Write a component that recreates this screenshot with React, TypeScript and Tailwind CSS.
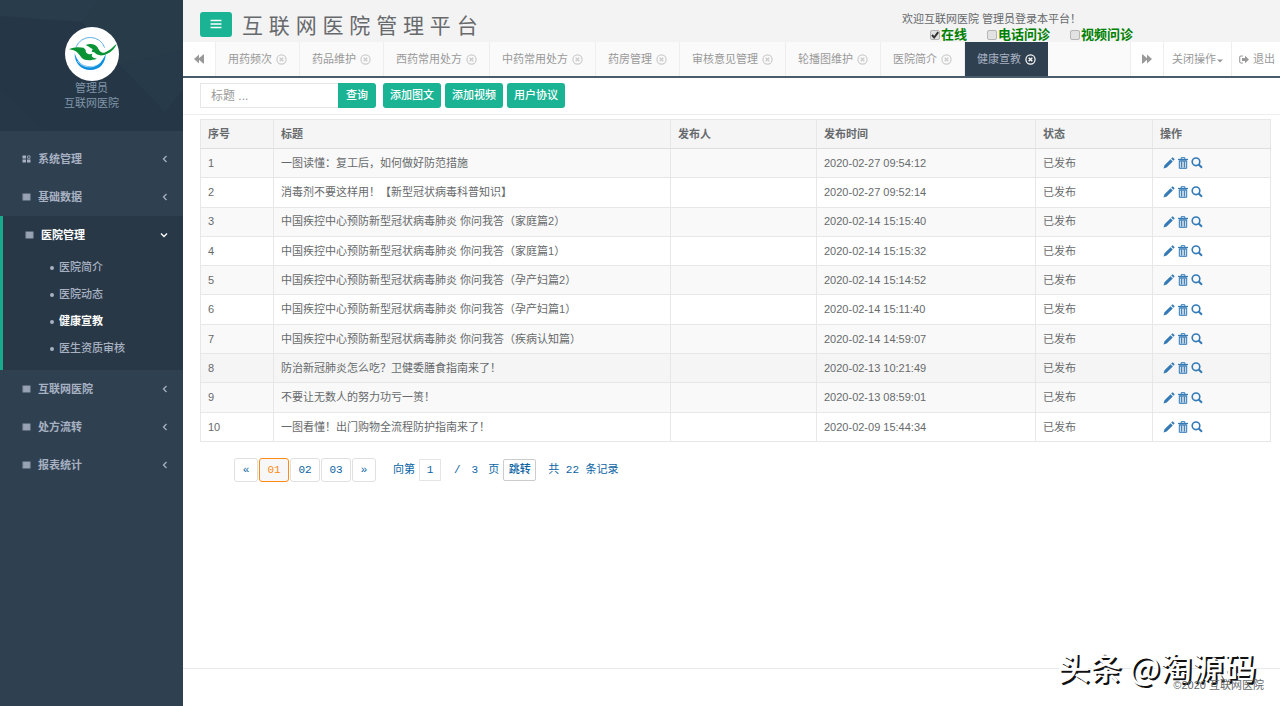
import { useState } from "react";
import type { ReactNode } from "react";

const menuTop = ["系统管理", "基础数据"];
const menuBottom = ["互联网医院", "处方流转", "报表统计"];
const subMenu = ["医院简介", "医院动态", "健康宣教", "医生资质审核"];

const tabs = [
  "用药频次",
  "药品维护",
  "西药常用处方",
  "中药常用处方",
  "药房管理",
  "审核意见管理",
  "轮播图维护",
  "医院简介",
  "健康宣教",
];

const rows = [
  { id: 1, title: "一图读懂：复工后，如何做好防范措施", time: "2020-02-27 09:54:12" },
  { id: 2, title: "消毒剂不要这样用！【新型冠状病毒科普知识】", time: "2020-02-27 09:52:14" },
  { id: 3, title: "中国疾控中心预防新型冠状病毒肺炎 你问我答（家庭篇2）", time: "2020-02-14 15:15:40" },
  { id: 4, title: "中国疾控中心预防新型冠状病毒肺炎 你问我答（家庭篇1）", time: "2020-02-14 15:15:32" },
  { id: 5, title: "中国疾控中心预防新型冠状病毒肺炎 你问我答（孕产妇篇2）", time: "2020-02-14 15:14:52" },
  { id: 6, title: "中国疾控中心预防新型冠状病毒肺炎 你问我答（孕产妇篇1）", time: "2020-02-14 15:11:40" },
  { id: 7, title: "中国疾控中心预防新型冠状病毒肺炎 你问我答（疾病认知篇）", time: "2020-02-14 14:59:07" },
  { id: 8, title: "防治新冠肺炎怎么吃？卫健委膳食指南来了！", time: "2020-02-13 10:21:49" },
  { id: 9, title: "不要让无数人的努力功亏一篑！", time: "2020-02-13 08:59:01" },
  { id: 10, title: "一图看懂！出门购物全流程防护指南来了！", time: "2020-02-09 15:44:34" },
];

const columns = [
  { name: "序号", width: "w-[73px]" },
  { name: "标题", width: "w-auto" },
  { name: "发布人", width: "w-[146px]" },
  { name: "发布时间", width: "w-[219px]" },
  { name: "状态", width: "w-[117px]" },
  { name: "操作", width: "w-[118px]" },
];

function Logo() {
  return (
    <svg viewBox="0 0 162 162" className="size-[54px]" aria-hidden>
      <circle cx="81" cy="81" r="81" fill="#fff" />
      <path d="M33 60A46 46 0 0 1 119 62" fill="none" stroke="#5fb0e8" strokeWidth="3" />
      <path d="M29 78C28 108 48 129 76 129C104 129 122 108 122 80C112 106 98 117 76 118C52 118 36 104 29 78Z" fill="#0d8fe0" />
      <path d="M37 102C54 124 88 127 108 104" fill="none" stroke="#fff" strokeWidth="2" />
      <path
        d="M12 67C28 59 44 60 56 62L62 69C61 76 67 82 75 82L82 80L80 87C82 91 88 94 96 95C78 101 60 102 50 92C42 84 38 70 12 67Z"
        fill="#0a9334"
      />
      <path
        d="M62 54C76 49 90 51 97 60C102 70 108 79 118 77C132 72 144 60 155 50C150 66 134 79 118 84C104 87 94 84 88 76L80 74L83 66C76 63 70 58 62 54Z"
        fill="#0a9334"
      />
    </svg>
  );
}

function Backward({ flip }: { flip?: boolean }) {
  return (
    <svg viewBox="0 0 12 10" className={flip ? "h-[10px] w-3 rotate-180" : "h-[10px] w-3"} fill="currentColor" aria-hidden>
      <path d="M1 5L6 0.500V4.300L10.200 0.500H11V9.500H10.200L6 5.700V9.500Z" />
    </svg>
  );
}

function CloseCircle() {
  return (
    <svg viewBox="0 0 12 12" className="size-[11px]" fill="none" stroke="currentColor" aria-hidden>
      <circle cx="6" cy="6" r="5" strokeWidth="1.300" />
      <path d="M4 4L8 8M8 4L4 8" strokeWidth="1.500" />
    </svg>
  );
}

function Angle({ open }: { open?: boolean }) {
  return (
    <svg viewBox="0 0 8 8" className="size-2" fill="none" stroke="currentColor" strokeWidth="1.300" aria-hidden>
      <path d={open ? "M1 2.500L4 5.500L7 2.500" : "M5.500 1L2.500 4L5.500 7"} />
    </svg>
  );
}

function MenuIcon({ grid }: { grid?: boolean }) {
  return (
    <svg viewBox="0 0 9 8" className="h-2 w-[9px]" aria-hidden>
      {grid ? (
        <g fill="#a7b1c2">
          <path d="M0.500 0.500H4V3.500H0.500ZM0.500 4.500H4V7.500H0.500ZM5 4.500H8.500V7.500H5Z" />
          <path d="M5.500 0.900H8V3.300H5.500Z" fill="none" stroke="#a7b1c2" strokeWidth="0.800" />
        </g>
      ) : (
        <>
          <path d="M0.500 0.500H8.500V7.500H0.500Z" fill="#8d98a9" />
          <path d="M2 2H7.500M2 4H7.500M2 6H7.500" stroke="#a7b1c2" strokeWidth="0.800" />
        </>
      )}
    </svg>
  );
}

function Pencil() {
  return (
    <svg viewBox="0 0 12 12" className="size-3" fill="currentColor" aria-hidden>
      <path d="M0.500 11.500L1.500 8.300L7.600 2.200L9.800 4.400L3.700 10.500ZM8.200 1.600L9.200 0.600Q9.600 0.300 10 0.600L11.400 2Q11.700 2.400 11.400 2.800L10.400 3.800Z" />
    </svg>
  );
}

function Trash() {
  return (
    <svg viewBox="0 0 12 12" className="size-3" fill="none" stroke="currentColor" aria-hidden>
      <path d="M1 2.500H11" strokeWidth="1.300" />
      <path d="M4.200 2V0.700H7.800V2" />
      <path d="M2.300 4V11.300H9.700V4Z" fill="#337ab7" fillOpacity="0.250" />
      <path d="M4.600 4.500V10.500M7.400 4.500V10.500" />
      <path d="M2 3.800H10" strokeWidth="0.700" />
    </svg>
  );
}

function Search() {
  return (
    <svg viewBox="0 0 12 12" className="size-3" fill="none" stroke="currentColor" aria-hidden>
      <circle cx="5" cy="4.800" r="3.800" strokeWidth="1.600" />
      <path d="M7.700 7.500L11 10.800" strokeWidth="2" />
    </svg>
  );
}

function MenuLink({ name, grid }: { name: string; grid?: boolean }) {
  return (
    <a href="#" className="flex h-[38px] items-center pr-[14px] pl-[22px] font-semibold hover:text-white">
      <MenuIcon grid={grid} />
      <span className="ml-[7px] flex-1">{name}</span>
      <Angle />
    </a>
  );
}

function Sidebar() {
  return (
    <nav className="w-[183px] shrink-0 bg-[#2f4050] text-[#a7b1c2]">
      <div className="relative flex h-[131px] flex-col items-center bg-[#253746] pt-[27px]">
        <svg viewBox="0 0 183 131" preserveAspectRatio="none" className="absolute inset-0 size-full" aria-hidden>
          <path d="M0 0H100L82 22L0 16Z" fill="#293c4b" />
          <path d="M100 0H183V50L120 65L82 22Z" fill="#283b49" />
          <path d="M120 65L165 112L183 90V50Z" fill="#273a49" />
          <path d="M0 90L45 131H0Z" fill="#263847" />
        </svg>
        <div className="relative flex flex-col items-center leading-[15px] text-[#8095a8]">
          <Logo />
          <span>管理员</span>
          <span>互联网医院</span>
        </div>
      </div>
      <div className="pt-[9px]">
        {menuTop.map((name, i) => (
          <MenuLink key={name} name={name} grid={i === 0} />
        ))}
        <div className="border-l-3 border-[#19aa8d] bg-[#293846] pb-2">
          <a href="#" className="flex h-[38px] items-center pr-[15px] pl-[22px] font-semibold text-white">
            <MenuIcon />
            <span className="ml-[7px] flex-1">医院管理</span>
            <Angle open />
          </a>
          <ul>
            {subMenu.map((name) => (
              <li key={name}>
                <a
                  href="#"
                  className={
                    name === "健康宣教"
                      ? "flex h-[27px] items-center pl-[47px] font-semibold text-white"
                      : "flex h-[27px] items-center pl-[47px] font-medium hover:text-white"
                  }
                >
                  <span className="mr-[5px] size-1 rounded-full bg-[#a7b1c2]" />
                  {name}
                </a>
              </li>
            ))}
          </ul>
        </div>
        {menuBottom.map((name) => (
          <MenuLink key={name} name={name} />
        ))}
      </div>
    </nav>
  );
}

function StatusCheck({ label, initial }: { label: string; initial?: boolean }) {
  const [checked, setChecked] = useState(!!initial);
  return (
    <label className="flex items-center gap-px text-[13px] leading-4 font-bold text-[#008000]">
      <span className="grid">
        <input
          type="checkbox"
          checked={checked}
          onChange={() => setChecked(!checked)}
          className="col-start-1 row-start-1 size-[10px] appearance-none rounded-xs border border-[#b5b5b5] bg-[#e2e2e2]"
        />
        {checked && (
          <svg viewBox="0 0 10 10" className="pointer-events-none col-start-1 row-start-1 size-[10px]" aria-hidden>
            <path d="M2 5L4.200 7.500L8.200 2.200" fill="none" stroke="#333" strokeWidth="2" />
          </svg>
        )}
      </span>
      {label}
    </label>
  );
}

function Header() {
  return (
    <header className="flex h-[42px] items-center bg-[#f3f3f4] pl-[17px]">
      <button aria-label="菜单" className="mt-[6px] flex h-[25px] w-8 items-center justify-center rounded-[3px] bg-[#1ab394] text-white">
        <svg viewBox="0 0 12 10" className="h-[10px] w-3" aria-hidden>
          <path d="M0.500 1.500H11.500M0.500 5H11.500M0.500 8.500H11.500" stroke="currentColor" strokeWidth="1.500" />
        </svg>
      </button>
      <h1 className="mt-[10px] ml-[10px] text-[21px] leading-6 whitespace-nowrap">互 联 网 医 院 管 理 平 台</h1>
      <div className="mt-3 mr-[147px] ml-auto">
        <p className="leading-4">欢迎互联网医院 管理员登录本平台！</p>
        <div className="flex gap-5 pl-7">
          <StatusCheck label="在线" initial />
          <StatusCheck label="电话问诊" />
          <StatusCheck label="视频问诊" />
        </div>
      </div>
    </header>
  );
}

function TabBar() {
  return (
    <div className="flex h-9 border-b-2 border-[#4a5b6b] bg-[#fafafa] text-[#999]">
      <button aria-label="向左" className="flex w-[33px] items-center justify-center border-r border-[#eee] bg-white">
        <Backward />
      </button>
      <div className="flex min-w-0 flex-1 overflow-hidden">
        {tabs.map((tab) => (
          <a
            key={tab}
            href="#"
            className={
              tab === "健康宣教"
                ? "flex shrink-0 items-center gap-[4px] bg-[#2f4050] px-3 text-[#a7b1c2]"
                : "flex shrink-0 items-center gap-[4px] border-r border-[#eee] px-3"
            }
          >
            {tab}
            <span className={tab === "健康宣教" ? "text-white" : "text-[#ccc]"}>
              <CloseCircle />
            </span>
          </a>
        ))}
      </div>
      <button aria-label="向右" className="flex w-[33px] items-center justify-center border-l border-[#eee] bg-white">
        <Backward flip />
      </button>
      <button className="flex w-[68px] items-center justify-center gap-px border-l border-[#eee] bg-white">
        关闭操作
        <svg viewBox="0 0 6 4" className="mt-1 h-1 w-[6px]" fill="currentColor" aria-hidden>
          <path d="M0 0.500H6L3 3.500Z" />
        </svg>
      </button>
      <a href="#" className="flex w-[49px] items-center gap-1 border-l border-[#eee] bg-white pl-[7px]">
        <svg viewBox="0 0 10 9" className="h-[9px] w-[10px]" aria-hidden>
          <path d="M4 1H2Q0.700 1 0.700 2.200V6.800Q0.700 8 2 8H4" fill="none" stroke="currentColor" strokeWidth="1.100" />
          <path d="M3 3H6V0.800L10 4.500L6 8.200V6H3Z" fill="currentColor" />
        </svg>
        退出
      </a>
    </div>
  );
}

function GreenButton({ children }: { children: ReactNode }) {
  return <button className="h-[25px] rounded-[3px] bg-[#1ab394] px-[7px] font-medium text-white hover:bg-[#18a689]">{children}</button>;
}

function Toolbar() {
  return (
    <form className="flex gap-1 border-b border-[#eee] pt-[5px] pb-[6px] pl-[17px]" onSubmit={(e) => e.preventDefault()}>
      <div className="mr-[3px] flex">
        <input
          type="text"
          aria-label="标题"
          placeholder="标题 ..."
          className="h-[25px] w-[138px] border border-r-0 border-[#e5e6e7] px-[10px] text-[12px] outline-none placeholder:text-[#999]"
        />
        <button className="h-[25px] rounded-r-[3px] bg-[#1ab394] px-2 font-medium text-white">查询</button>
      </div>
      <GreenButton>添加图文</GreenButton>
      <GreenButton>添加视频</GreenButton>
      <GreenButton>用户协议</GreenButton>
    </form>
  );
}

function ArticleTable() {
  return (
    <table className="h-[323px] w-full table-fixed border-collapse border border-[#e7e7e7] text-left">
      <thead>
        <tr className="h-[29px] bg-[#f5f5f6]">
          {columns.map((c) => (
            <th key={c.name} className={`${c.width} border border-[#e7e7e7] border-b-[#ddd] px-[7px] font-bold`}>
              {c.name}
            </th>
          ))}
        </tr>
      </thead>
      <tbody>
        {rows.map((row) => (
          <tr key={row.id} className={row.id === 8 ? "h-[29px] bg-[#f5f5f5]" : "h-[29px] odd:bg-[#f9f9f9]"}>
            <td className="border border-[#e7e7e7] px-[7px]">{row.id}</td>
            <td className="border border-[#e7e7e7] px-[7px]">{row.title}</td>
            <td className="border border-[#e7e7e7] px-[7px]" />
            <td className="border border-[#e7e7e7] px-[7px]">{row.time}</td>
            <td className="border border-[#e7e7e7] px-[7px]">已发布</td>
            <td className="border border-[#e7e7e7] px-[10px]">
              <div className="flex gap-[2px] text-[#337ab7]">
                <a href="#" aria-label="编辑">
                  <Pencil />
                </a>
                <a href="#" aria-label="删除">
                  <Trash />
                </a>
                <a href="#" aria-label="查看">
                  <Search />
                </a>
              </div>
            </td>
          </tr>
        ))}
      </tbody>
    </table>
  );
}

function Pagination() {
  return (
    <div className="mt-4 flex items-center gap-px pl-[34px] font-['Liberation_Mono','Noto_Sans_CJK_SC',monospace] text-[11px] text-[#0a64a4]">
      <button className="h-6 w-6 rounded-[3px] border border-[#e0e0e0]">«</button>
      <button className="h-6 w-[30px] rounded-[3px] border border-[#ff8a14] bg-[#f7f7f7] text-[#ff8a14]">01</button>
      <button className="h-6 w-[30px] rounded-[3px] border border-[#e0e0e0]">02</button>
      <button className="h-6 w-[30px] rounded-[3px] border border-[#e0e0e0]">03</button>
      <button className="h-6 w-6 rounded-[3px] border border-[#e0e0e0]">»</button>
      <label htmlFor="page" className="ml-4">
        向第
      </label>
      <input id="page" defaultValue="1" className="ml-[3px] h-[22px] w-[22px] border border-[#e5e5e5] text-center outline-none" />
      <span className="ml-3">/</span>
      <span className="ml-[10px]">3</span>
      <span className="ml-[9px]">页</span>
      <button className="ml-[3px] h-[22px] w-[33px] rounded-xs border border-[#ccc] font-medium">跳转</button>
      <span className="ml-[11px]">共 22 条记录</span>
    </div>
  );
}

export default function App() {
  return (
    <div className="relative flex min-h-screen bg-white font-['Liberation_Sans','Noto_Sans_CJK_SC',sans-serif] text-[11px] text-[#676a6c]">
      <Sidebar />
      <div className="flex min-w-0 flex-1 flex-col">
        <Header />
        <TabBar />
        <Toolbar />
        <main className="pt-1 pr-[9px] pl-[17px]">
          <ArticleTable />
          <Pagination />
        </main>
        <footer className="mt-auto flex h-[38px] items-center justify-end border-t border-[#e7eaec] pr-4 pb-1">
          <span className="relative z-10">©2020 互联网医院</span>
        </footer>
      </div>
      <div className="pointer-events-none absolute right-6 bottom-5 font-['Noto_Sans_CJK_SC',sans-serif] text-[32px] leading-10 font-medium text-white [text-shadow:2px_2px_0_#111]">
        头条 @淘源码
      </div>
    </div>
  );
}
